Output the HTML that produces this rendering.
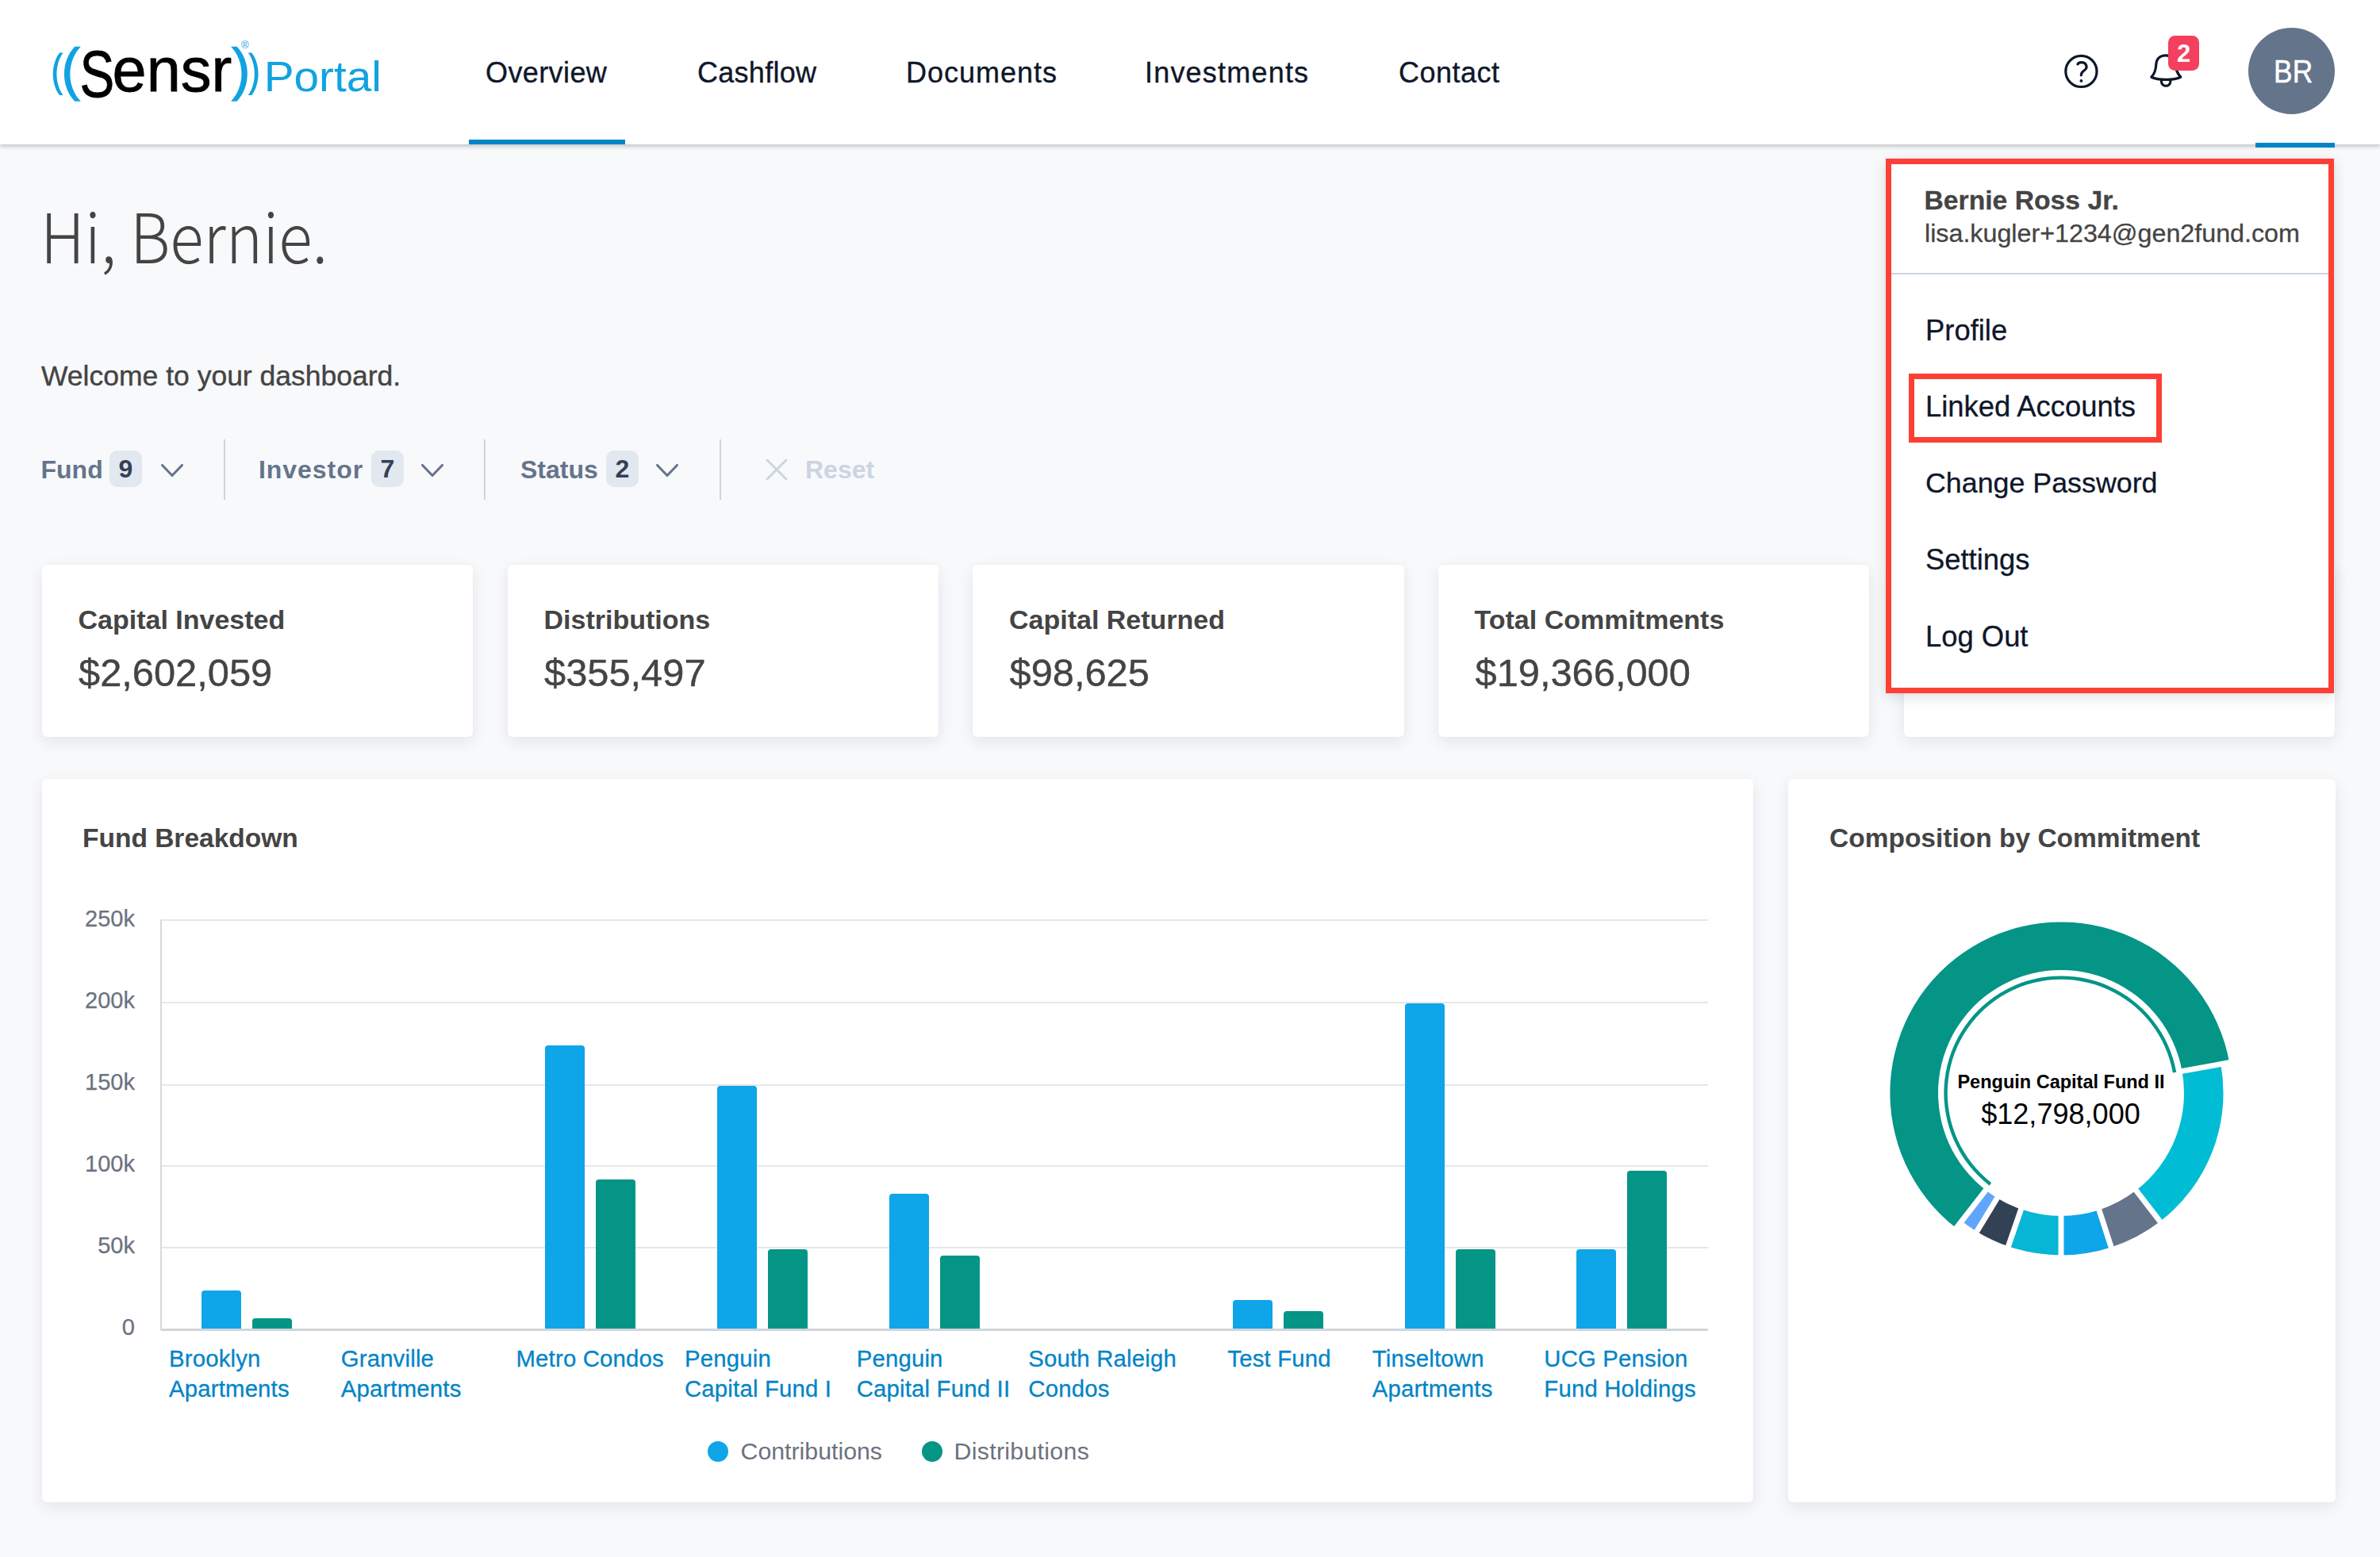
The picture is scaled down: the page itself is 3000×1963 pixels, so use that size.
<!DOCTYPE html>
<html lang="en">
<head>
<meta charset="utf-8">
<title>Sensr Portal - Overview</title>
<style>
*{box-sizing:border-box;margin:0;padding:0}
html,body{width:3000px;height:1963px;overflow:hidden}
body{background:#f8f9fb;font-family:"Liberation Sans",sans-serif;color:#444;position:relative}
.t{position:absolute;white-space:nowrap;line-height:1}
.abs{position:absolute}
header{position:absolute;left:0;top:0;width:3000px;height:182px;background:#fff;box-shadow:0 3px 5px rgba(0,0,0,.2);z-index:5}
.nav{font-size:36px;color:#0f172a;top:74px;-webkit-text-stroke:.35px #0f172a}
.ul{position:absolute;height:6px;background:#0284c7}
.card{position:absolute;background:#fff;border-radius:6px;box-shadow:0 6px 20px rgba(15,23,42,.085),0 0 2px rgba(15,23,42,.03)}
.ct{font-size:34px;font-weight:700;color:#444}
.ht{font-size:33.5px;font-weight:700;color:#444}
.cv{font-size:48.8px;color:#444;-webkit-text-stroke:.4px #444}
.flt{font-size:32px;font-weight:700;color:#64748b}
.bdg{position:absolute;top:568px;width:41px;height:46px;border-radius:10px;background:#e2e8f0;color:#334155;font-weight:700;font-size:32px;line-height:46px;text-align:center}
.dv{position:absolute;top:554px;width:2.5px;height:76px;background:#cbd5e1}
.mi{font-size:36px;color:#0f172a;left:2427px;-webkit-text-stroke:.3px}
.yl{-webkit-text-stroke:.25px #6b7280;font-size:29px;color:#6b7280;text-align:right;width:80px;left:90px}
.xl{position:absolute;-webkit-text-stroke:.3px #0284c7;letter-spacing:.2px;font-size:29.3px;line-height:38px;color:#0284c7;top:1694.1px;white-space:nowrap}
.bar{position:absolute;width:50px;border-radius:4px 4px 0 0}
.b1{background:#0ea5e9}
.b2{background:#049587}
.gl{position:absolute;left:203px;width:1950px;height:2px;background:#e5e7eb}
</style>
</head>
<body>

<!-- ================= HEADER ================= -->
<header>
<svg class="abs" style="left:50px;top:40px" width="450" height="100" viewBox="50 40 450 100">
  <g fill="#10a3e0">
    <path d="M75.10 66.4 C64.03 80.84 64.03 105.46 75.10 119.9 L79.65 119.9 C68.78 105.46 68.78 80.84 79.65 66.4 Z"/>
    <path d="M94.20 58.8 C76.60 77.43 76.60 109.17 94.20 127.8 L101.80 127.8 C83.93 109.17 83.93 77.43 101.80 58.8 Z"/>
    <path d="M298.70 58.8 C316.30 77.43 316.30 109.17 298.70 127.8 L291.10 127.8 C308.97 109.17 308.97 77.43 291.10 58.8 Z"/>
    <path d="M317.30 66.4 C328.37 80.84 328.37 105.46 317.30 119.9 L312.75 119.9 C323.62 105.46 323.62 80.84 312.75 66.4 Z"/>
  </g>
  <text transform="translate(100.6 122.0) scale(0.82 1.05)" font-family="Liberation Sans, sans-serif" font-size="80" fill="#000" stroke="#000" stroke-width="0.8">S</text>
  <text transform="translate(141.6 114.7) scale(0.968 0.97)" font-family="Liberation Sans, sans-serif" font-size="80" fill="#000" stroke="#000" stroke-width="0.8">ensr</text>
  <text x="304" y="61" font-family="Liberation Sans, sans-serif" font-size="13" fill="#10a3e0">®</text>
  <text transform="translate(332.7 114.7) scale(1.05 1)" font-family="Liberation Sans, sans-serif" font-size="54" fill="#10a3e0">Portal</text>
</svg>

<div class="t nav" style="left:612px;letter-spacing:.4px">Overview</div>
<div class="t nav" style="left:879px;letter-spacing:.28px">Cashflow</div>
<div class="t nav" style="left:1142px;letter-spacing:1px">Documents</div>
<div class="t nav" style="left:1443px;letter-spacing:1.2px">Investments</div>
<div class="t nav" style="left:1763px;letter-spacing:.5px">Contact</div>
<div class="ul" style="left:591px;top:176px;width:197px"></div>

<!-- help icon -->
<svg class="abs" style="left:2598px;top:65px" width="50" height="50" viewBox="0 0 50 50">
  <circle cx="25.4" cy="24.9" r="19.6" fill="none" stroke="#0f172a" stroke-width="3.2"/>
  <path d="M20.900 15.900 C22.500 13.300 28.600 12.600 31 16 C33.300 19.500 31.500 22.300 28.500 24.300 C26.300 25.900 25.400 27.300 25.300 29.800" fill="none" stroke="#0f172a" stroke-width="3.2" stroke-linecap="round"/>
  <circle cx="25.4" cy="36.9" r="1.9" fill="#0f172a"/>
</svg>
<!-- bell icon -->
<svg class="abs" style="left:2706px;top:64px" width="50" height="50" viewBox="0 0 50 50">
  <path d="M23.9 5.800 C16.5 5.800 12.2 10.500 11.800 17 C11.500 24 10.500 28.500 5.800 33.200 C10 35.200 17 36.400 24.300 36.400 C31.600 36.400 38.600 35.200 42.800 33.200 C38 28.500 37 24 36.400 17 C36 10.500 31.300 5.800 23.900 5.800 Z" fill="none" stroke="#0f172a" stroke-width="3.2" stroke-linejoin="round"/>
  <path d="M18.400 38.300 C18.800 46.200 29.500 46.200 29.900 38.300" fill="none" stroke="#0f172a" stroke-width="3.2" stroke-linecap="round"/>
</svg>
<div class="abs" style="left:2733.300px;top:45px;width:38.600px;height:43.800px;border-radius:8.500px;background:#f43f5e;color:#fff;font-weight:700;font-size:31px;line-height:45.500px;text-align:center">2</div>

<div class="abs" style="left:2834px;top:35px;width:109px;height:109px;border-radius:50%;background:#64748b;color:#fff;font-size:40px;line-height:111.500px;text-align:center;text-indent:2px;-webkit-text-stroke:.5px #fff"><span style="display:inline-block;transform:scaleX(.885)">BR</span></div>
</header>
<div class="ul" style="left:2843px;top:180px;width:100px;z-index:6"></div>

<!-- ================= PAGE ================= -->
<div class="t" style="left:51px;top:258.500px;font-size:78.500px;font-weight:300;font-family:'Noto Sans CJK SC','Liberation Sans',sans-serif;color:#444;transform-origin:0 73.500px;transform:scaleY(1.1)">Hi, Bernie.</div>
<div class="t" style="left:52px;top:456.600px;font-size:35.500px;color:#444;-webkit-text-stroke:.4px #444">Welcome to your dashboard.</div>

<!-- filters -->
<div class="t flt" style="left:51.500px;top:576px">Fund</div>
<div class="bdg" style="left:138px">9</div>
<svg class="abs" style="left:199px;top:580px" width="36" height="28" viewBox="0 0 36 28"><path d="M5.5 6.5 L18 19.5 L30.500 6.5" fill="none" stroke="#64748b" stroke-width="3.1" stroke-linecap="round" stroke-linejoin="round"/></svg>
<div class="dv" style="left:281.500px"></div>

<div class="t flt" style="left:326px;top:576px;letter-spacing:.95px">Investor</div>
<div class="bdg" style="left:468px">7</div>
<svg class="abs" style="left:527px;top:580px" width="36" height="28" viewBox="0 0 36 28"><path d="M5.5 6.5 L18 19.5 L30.500 6.5" fill="none" stroke="#64748b" stroke-width="3.1" stroke-linecap="round" stroke-linejoin="round"/></svg>
<div class="dv" style="left:609.500px"></div>

<div class="t flt" style="left:656px;top:576px">Status</div>
<div class="bdg" style="left:764px">2</div>
<svg class="abs" style="left:823px;top:580px" width="36" height="28" viewBox="0 0 36 28"><path d="M5.5 6.5 L18 19.5 L30.500 6.5" fill="none" stroke="#64748b" stroke-width="3.1" stroke-linecap="round" stroke-linejoin="round"/></svg>
<div class="dv" style="left:906.500px"></div>

<svg class="abs" style="left:962px;top:575px" width="34" height="34" viewBox="0 0 34 34"><path d="M5 5 L29 29 M29 5 L5 29" fill="none" stroke="#cbd5e1" stroke-width="3" stroke-linecap="round"/></svg>
<div class="t flt" style="left:1015px;top:576px;color:#cbd5e1">Reset</div>

<!-- stat cards -->
<div class="card" style="left:53px;top:712px;width:543px;height:217px"></div>
<div class="card" style="left:640px;top:712px;width:543px;height:217px"></div>
<div class="card" style="left:1226px;top:712px;width:543.500px;height:217px"></div>
<div class="card" style="left:1813px;top:712px;width:543px;height:217px"></div>
<div class="card" style="left:2400px;top:712px;width:543px;height:217px"></div>

<div class="t ct" style="left:98.500px;top:763.500px">Capital Invested</div>
<div class="t cv" style="left:99px;top:824px">$2,602,059</div>
<div class="t ct" style="left:685.500px;top:763.500px">Distributions</div>
<div class="t cv" style="left:686px;top:824px">$355,497</div>
<div class="t ct" style="left:1272px;top:763.500px">Capital Returned</div>
<div class="t cv" style="left:1272.500px;top:824px">$98,625</div>
<div class="t ct" style="left:1858.500px;top:763.500px">Total Commitments</div>
<div class="t cv" style="left:1859.500px;top:824px">$19,366,000</div>

<!-- CHARTS -->
<!--BARCHART-->
<div class="card" style="left:53px;top:982px;width:2157px;height:912px"></div>
<div class="t ht" style="left:104px;top:1040px">Fund Breakdown</div>
<div class="gl" style="top:1159.0px;background:#e5e7eb"></div>
<div class="t yl" style="top:1143.5px">250k</div>
<div class="gl" style="top:1263.3px;background:#e5e7eb"></div>
<div class="t yl" style="top:1246.8px">200k</div>
<div class="gl" style="top:1366.6px;background:#e5e7eb"></div>
<div class="t yl" style="top:1350.1px">150k</div>
<div class="gl" style="top:1469.0px;background:#e5e7eb"></div>
<div class="t yl" style="top:1452.5px">100k</div>
<div class="gl" style="top:1572.2px;background:#e5e7eb"></div>
<div class="t yl" style="top:1555.7px">50k</div>
<div class="gl" style="top:1675.0px;background:#d1d5db;height:2.5px"></div>
<div class="t yl" style="top:1658.5px">0</div>
<div class="abs" style="left:201.500px;top:1159px;width:2px;height:518px;background:#d6d9dd"></div>
<div class="bar b1" style="left:253.8px;top:1627.4px;height:47.6px"></div>
<div class="bar b2" style="left:317.8px;top:1662.0px;height:13.0px"></div>
<div class="xl" style="left:213.0px">Brooklyn<br>Apartments</div>
<div class="xl" style="left:429.7px">Granville<br>Apartments</div>
<div class="bar b1" style="left:687.2px;top:1318.0px;height:357.0px"></div>
<div class="bar b2" style="left:751.2px;top:1487.0px;height:188.0px"></div>
<div class="xl" style="left:650.5px">Metro Condos</div>
<div class="bar b1" style="left:903.8px;top:1369.0px;height:306.0px"></div>
<div class="bar b2" style="left:967.8px;top:1574.7px;height:100.3px"></div>
<div class="xl" style="left:863.0px">Penguin<br>Capital Fund I</div>
<div class="bar b1" style="left:1120.5px;top:1504.8px;height:170.2px"></div>
<div class="bar b2" style="left:1184.5px;top:1583.4px;height:91.6px"></div>
<div class="xl" style="left:1079.7px">Penguin<br>Capital Fund II</div>
<div class="xl" style="left:1296.3px">South Raleigh<br>Condos</div>
<div class="bar b1" style="left:1553.8px;top:1639.4px;height:35.6px"></div>
<div class="bar b2" style="left:1617.8px;top:1652.7px;height:22.3px"></div>
<div class="xl" style="left:1547.3px">Test Fund</div>
<div class="bar b1" style="left:1770.5px;top:1265.4px;height:409.6px"></div>
<div class="bar b2" style="left:1834.5px;top:1574.6px;height:100.4px"></div>
<div class="xl" style="left:1729.7px">Tinseltown<br>Apartments</div>
<div class="bar b1" style="left:1987.2px;top:1574.6px;height:100.4px"></div>
<div class="bar b2" style="left:2051.2px;top:1476.0px;height:199.0px"></div>
<div class="xl" style="left:1946.3px">UCG Pension<br>Fund Holdings</div>
<div class="abs" style="left:892px;top:1816.500px;width:26px;height:26px;border-radius:50%;background:#0ea5e9"></div>
<div class="t" style="left:933.500px;top:1815.300px;font-size:30.300px;color:#6b7280">Contributions</div>
<div class="abs" style="left:1162px;top:1816.500px;width:26px;height:26px;border-radius:50%;background:#049587"></div>
<div class="t" style="left:1202.500px;top:1815.300px;font-size:30.300px;letter-spacing:.3px;color:#6b7280">Distributions</div>
<!--/BARCHART-->
<!--DONUT-->
<div class="card" style="left:2253.500px;top:982px;width:690px;height:912px"></div>
<div class="t ht" style="left:2306px;top:1040px">Composition by Commitment</div>
<svg class="abs" style="left:2348px;top:1128px" width="500" height="500" viewBox="0 0 500 500">
<path d="M117.86 420.36 A215.6 215.6 0 1 1 462.16 211.64 L402.53 222.42 A155 155 0 1 0 155.00 372.47 Z" fill="#049587"/>
<path d="M159.53 366.63 A147.6 147.6 0 1 1 395.24 223.74 L390.91 224.52 A143.2 143.2 0 1 0 162.23 363.15 Z" fill="#049587"/>
<path d="M451.24 213.61 A204.5 204.5 0 0 1 374.77 412.02 L344.57 372.80 A155 155 0 0 0 402.53 222.42 Z" fill="#00bcd4"/>
<path d="M374.77 412.02 A204.5 204.5 0 0 1 313.19 444.49 L297.90 397.41 A155 155 0 0 0 344.57 372.80 Z" fill="#64748b"/>
<path d="M313.19 444.49 A204.5 204.5 0 0 1 250.00 454.50 L250.00 405.00 A155 155 0 0 0 297.90 397.41 Z" fill="#0ea5e9"/>
<path d="M250.00 454.50 A204.5 204.5 0 0 1 183.42 443.36 L199.54 396.56 A155 155 0 0 0 250.00 405.00 Z" fill="#06b6d4"/>
<path d="M183.42 443.36 A204.5 204.5 0 0 1 143.76 424.74 L169.47 382.44 A155 155 0 0 0 199.54 396.56 Z" fill="#334155"/>
<path d="M143.76 424.74 A204.5 204.5 0 0 1 124.66 411.59 L155.00 372.47 A155 155 0 0 0 169.47 382.44 Z" fill="#60a5fa"/>
<path d="M398.59 223.13 L468.46 210.50" stroke="#fff" stroke-width="7" fill="none"/>
<path d="M342.13 369.64 L385.45 425.89" stroke="#fff" stroke-width="7" fill="none"/>
<path d="M296.66 393.61 L318.60 461.13" stroke="#fff" stroke-width="7" fill="none"/>
<path d="M250.00 401.00 L250.00 472.00" stroke="#fff" stroke-width="7" fill="none"/>
<path d="M200.84 392.77 L177.72 459.91" stroke="#fff" stroke-width="7" fill="none"/>
<path d="M171.55 379.02 L134.67 439.69" stroke="#fff" stroke-width="7" fill="none"/>
<path d="M157.45 369.31 L113.93 425.41" stroke="#fff" stroke-width="7" fill="none"/>
<text x="250.0" y="243.6" text-anchor="middle" font-family="Liberation Sans, sans-serif" font-weight="700" font-size="23.5" fill="#000">Penguin Capital Fund II</text>
<text x="249.5" y="288.8" text-anchor="middle" font-family="Liberation Sans, sans-serif" font-size="36.1" fill="#000">$12,798,000</text>
</svg>
<!--/DONUT-->
<!--DROPDOWN-->
<div class="abs" style="left:2377px;top:200px;width:565px;height:674px;background:#fff;box-shadow:0 5px 16px rgba(15,23,42,.13),0 0 4px rgba(15,23,42,.05);z-index:8"></div>
<div class="abs" style="left:2377px;top:200px;width:565px;height:674px;border:7.500px solid #fd4035;z-index:10"></div>
<div class="abs" style="left:2384px;top:343.500px;width:558px;height:2.500px;background:#cbd5e1;z-index:9"></div>
<div class="t mi" style="top:235.5px;font-size:33.7px;z-index:9;font-weight:700;color:#444;left:2425.500px">Bernie Ross Jr.</div>
<div class="t mi" style="top:277.7px;font-size:32.25px;z-index:9;color:#444;left:2426px">lisa.kugler+1234@gen2fund.com</div>
<div class="t mi" style="top:399.3px;font-size:36.4px;z-index:9;">Profile</div>
<div class="t mi" style="top:495.4px;font-size:36.4px;z-index:9;">Linked Accounts</div>
<div class="t mi" style="top:591.7px;font-size:35.8px;z-index:9;">Change Password</div>
<div class="t mi" style="top:687.7px;font-size:36.4px;z-index:9;">Settings</div>
<div class="t mi" style="top:784.5px;font-size:36.4px;z-index:9;">Log Out</div>
<div class="abs" style="left:2406px;top:471px;width:319px;height:87px;border:7.500px solid #fd4035;z-index:10"></div>
<!--/DROPDOWN-->

</body>
</html>
